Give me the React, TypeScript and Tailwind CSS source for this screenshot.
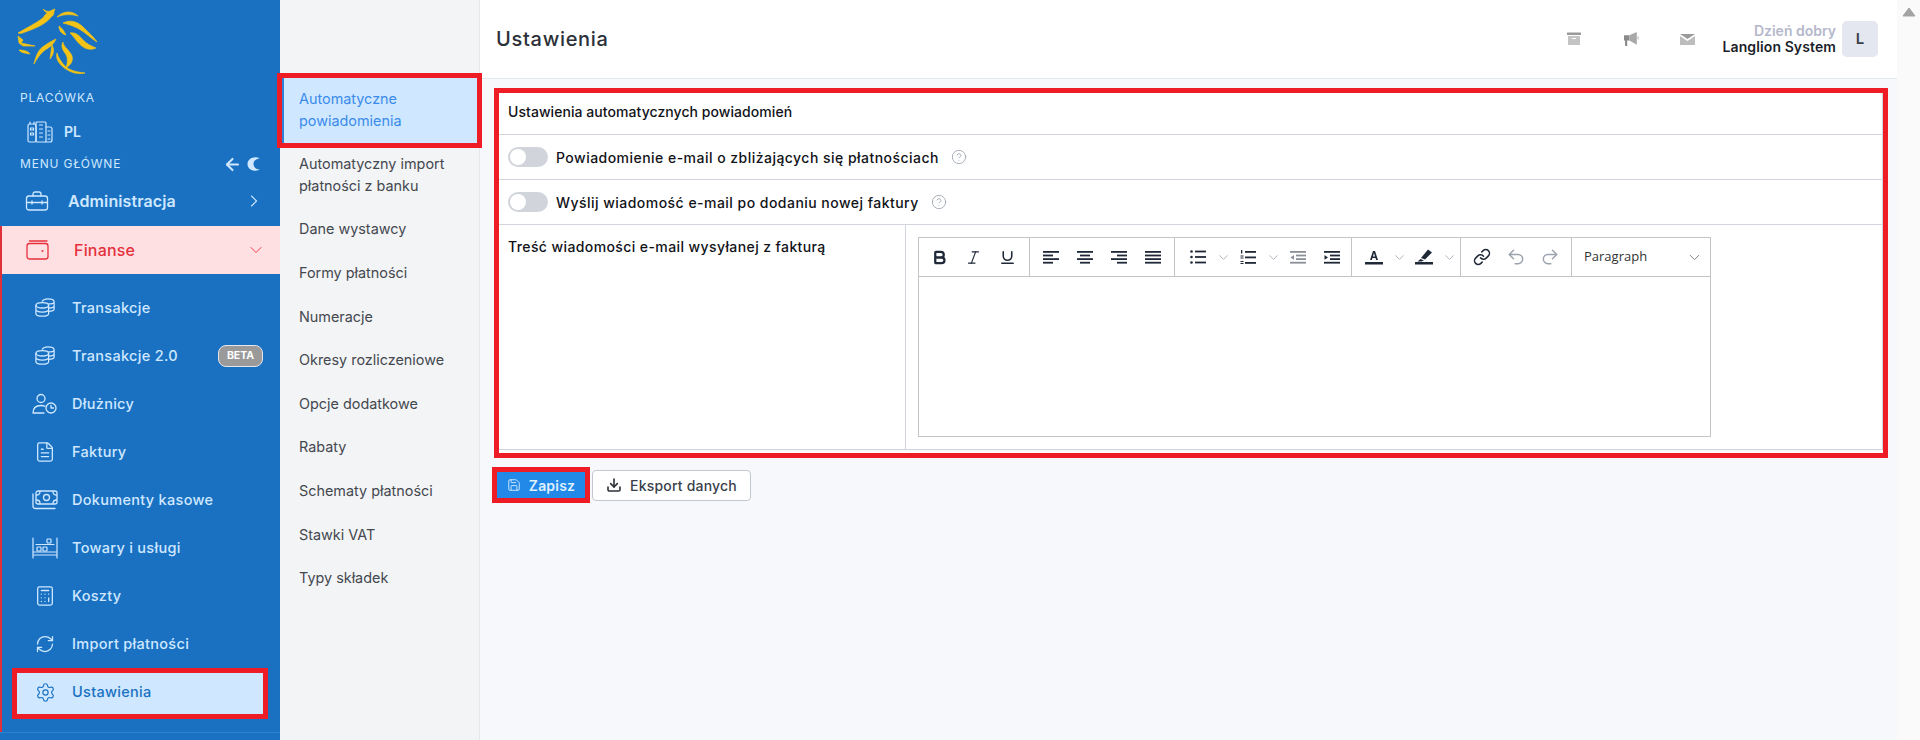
import React from "react";
import {
  ArrowLeft, ChevronRight, ChevronDown, Settings, RefreshCw, Calculator, FileText,
  CircleHelp, Bold, Italic, Underline, Link, Undo2, Redo2, Save, Download,
} from "lucide-react";

const Lion = () => (
  <svg width="84" height="68" viewBox="14 5 84 68" className="block">
    <g fill="#f3c316" stroke="#f3c316" strokeWidth="0.7" strokeLinejoin="round">
      <path d="M17 32C27 26 34 23 42 17C44 13 48 10 54 8C52 11 54 14 50 16C46 22 36 27 24 31C22 32 19 33 17 32Z" />
      <path d="M42 8C45 11 49 11 53 9C50 13 45 13 42 8Z" />
      <path d="M17 35L22 39L20 42L34 45L22 45L18 42Z" />
      <path d="M18 49C23 49 27 50 29 53C24 52 20 52 18 49Z" />
      <path d="M56 16C63 9 72 10 77 15C70 13 63 13 56 16Z" />
      <path d="M62 22C70 18 78 21 84 28C88 32 93 36 96 41C88 36 82 29 74 26C70 24 66 23 62 22Z" />
      <path d="M69 32C74 31 78 34 82 39C86 43 90 45 95 47C86 51 80 45 75 39C73 36 71 34 69 32Z" />
      <path d="M58 25C61 27 63 30 65 34C61 33 58 30 58 25Z" />
      <path d="M55 38C52 44 49 46 44 49C40 52 37 56 33 63C35 54 38 48 43 45C47 42 51 40 55 38Z" />
      <path d="M51 44C54 50 52 54 49 58C50 53 50 49 51 44Z" />
      <path d="M62 41C62 45 67 48 70 53C73 58 71 63 65 67C67 61 67 56 64 52C61 48 60 45 62 41Z" />
      <path d="M56 52C57 56 60 61 64 65C68 69 75 71 84 72C74 74 66 70 60 64C56 60 55 56 56 52Z" />
    </g>
  </svg>
);

const sw = { fill: "none", stroke: "currentColor", strokeWidth: 1.5, strokeLinecap: "round" as const, strokeLinejoin: "round" as const };

const ToolboxIcon = () => (
  <svg width="24" height="20" viewBox="0 0 24 20" {...sw} strokeWidth={1.3}>
    <rect x="1.500" y="5" width="21" height="14" rx="2.500" />
    <path d="M8 5V3c0-1 .8-2 2-2h4c1.200 0 2 1 2 2v2M1.500 11.500h21M7 10v3M17 10v3" />
  </svg>
);
const WalletIcon = () => (
  <svg width="23" height="20" viewBox="0 0 23 20" {...sw} strokeWidth={1.3}>
    <path d="M3.500 1H21" />
    <rect x="1" y="3.500" width="21" height="15.500" rx="2.500" />
    <circle cx="16.500" cy="11" r=".4" />
  </svg>
);
const MoonIcon = () => (
  <svg width="13" height="14" viewBox="0 0 13 14" fill="currentColor">
    <path d="M8.500 0.200C4 0.200 0.500 3 0.500 7s3.500 6.800 8 6.800c1.700 0 3.200-.5 4.200-1.200C9.500 12.500 6.500 10.300 6.500 7S9.500 1.500 12.700 1.400C11.600.6 10.200.2 8.500.2Z" />
  </svg>
);
const Coins = () => (
  <svg width="20" height="20" viewBox="0 0 22 22" {...sw} strokeWidth={1.4}>
    <ellipse cx="8" cy="8" rx="7" ry="3" />
    <path d="M1 8v9c0 1.700 3 3 7 3s7-1.300 7-3V8M1 12.500c0 1.700 3 3 7 3s7-1.300 7-3" />
    <path d="M8 3.500C9 2 11 1 14 1c4 0 7 1.200 7 3v8c0 1.200-2 2.500-6 2.700M15 6.500c3 0 6-1 6-2.500M15 11c3 0 6-1 6-2.500" />
  </svg>
);
const UserClock = () => (
  <svg width="26" height="22" viewBox="0 0 26 22" {...sw} strokeWidth={1.3}>
    <circle cx="9" cy="5.500" r="4" />
    <path d="M1 20c0-5 3-7.500 8-7.500 1.500 0 3 .2 4 .8M1 20h11" />
    <circle cx="19" cy="15" r="5" />
    <path d="M19 12.500V15h2.500" />
  </svg>
);
const Cash = () => (
  <svg width="26" height="20" viewBox="0 0 26 20" {...sw} strokeWidth={1.3}>
    <rect x="4" y="1" width="21" height="13" rx="2" />
    <circle cx="14.500" cy="7.500" r="3" />
    <path d="M8 1.500C8 4 6.500 5 4.500 5M21 1.500C21 4 22.500 5 24.500 5M8 13.500C8 11 6.500 10 4.500 10M21 13.500C21 11 22.500 10 24.500 10" />
    <path d="M1 4v12c0 1.500 1 2.500 2.500 2.500H23" />
  </svg>
);
const Shelf = () => (
  <svg width="26" height="22" viewBox="0 0 26 22" {...sw} strokeWidth={1.2}>
    <path d="M1 1v20M25 1v20M1 15h24M1 18h24" />
    <rect x="5" y="10" width="4" height="4" rx=".8" /><rect x="11" y="10" width="4" height="4" rx=".8" />
    <rect x="15" y="2" width="4" height="4" rx=".8" />
    <path d="M4 7.500h18" />
  </svg>
);
const Buildings = () => (
  <svg width="26" height="22" viewBox="0 0 26 22" {...sw} strokeWidth={1.2}>
    <rect x="1" y="3" width="8" height="18" rx="1.500" />
    <path d="M3 3V1M7 3V1" />
    <rect x="9" y="1" width="10" height="20" rx="1" />
    <path d="M19 6h4c1 0 2 1 2 2v11c0 1-1 2-2 2h-4" />
    <path d="M3.500 7h3v2h-3zM3.500 12h3v2h-3zM12.500 4h3M12.500 8h3M12.500 12h3M12.500 16h3M21 10h2M21 14h2M21 18h2" />
  </svg>
);

const items: { t: string; icon: React.ReactNode; beta?: boolean }[] = [
  { t: "Transakcje", icon: <Coins /> },
  { t: "Transakcje 2.0", icon: <Coins />, beta: true },
  { t: "Dłużnicy", icon: <UserClock /> },
  { t: "Faktury", icon: <FileText size={22} strokeWidth={1.4} /> },
  { t: "Dokumenty kasowe", icon: <Cash /> },
  { t: "Towary i usługi", icon: <Shelf /> },
  { t: "Koszty", icon: <Calculator size={22} strokeWidth={1.4} /> },
  { t: "Import płatności", icon: <RefreshCw size={20} strokeWidth={1.5} /> },
];

const sub = ["Dane wystawcy", "Formy płatności", "Numeracje", "Okresy rozliczeniowe", "Opcje dodatkowe", "Rabaty", "Schematy płatności", "Stawki VAT", "Typy składek"];

const Lines = ({ w }: { w: number[] }) => (
  <svg width="16" height="13" viewBox="0 0 16 13" fill="currentColor">
    {w.map((x, i) => {
      const [a, b] = x < 0 ? [16 + x, -x] : [0, x];
      return <rect key={i} x={a} y={i * 3.600} width={b} height="1.800" />;
    })}
  </svg>
);
const AlignC = () => (
  <svg width="16" height="13" viewBox="0 0 16 13" fill="currentColor">
    <rect x="0" y="0" width="16" height="1.800" /><rect x="3" y="3.600" width="10" height="1.800" /><rect x="0" y="7.200" width="16" height="1.800" /><rect x="3" y="10.800" width="10" height="1.800" />
  </svg>
);
const Bullets = () => (
  <svg width="16" height="14" viewBox="0 0 16 14" fill="currentColor">
    <circle cx="1.500" cy="1.500" r="1.300" /><circle cx="1.500" cy="7" r="1.300" /><circle cx="1.500" cy="12.500" r="1.300" />
    <rect x="5" y="0.600" width="11" height="1.800" /><rect x="5" y="6.100" width="11" height="1.800" /><rect x="5" y="11.600" width="11" height="1.800" />
  </svg>
);
const Numbered = () => (
  <svg width="16" height="15" viewBox="0 0 16 15" fill="currentColor">
    <rect x="1" y="0" width="1.300" height="3.500" /><rect x="0.500" y="5.500" width="3" height="1" /><rect x="0.500" y="7.500" width="3" height="1" /><rect x="0.500" y="11" width="3" height="1" /><rect x="0.500" y="13" width="3" height="1" />
    <rect x="5" y="1" width="11" height="1.800" /><rect x="5" y="6.500" width="11" height="1.800" /><rect x="5" y="12" width="11" height="1.800" />
  </svg>
);
const Indent = ({ out }: { out?: boolean }) => (
  <svg width="16" height="13" viewBox="0 0 16 13" fill="currentColor">
    <rect x="0" y="0" width="16" height="1.800" /><rect x="6" y="3.600" width="10" height="1.800" /><rect x="6" y="7.200" width="10" height="1.800" /><rect x="0" y="10.800" width="16" height="1.800" />
    {out ? <path d="M4 4L0.500 6.400L4 8.800Z" /> : <path d="M0.500 4L4 6.400L0.500 8.800Z" />}
  </svg>
);
const FontColor = () => (
  <svg width="18" height="16" viewBox="0 0 18 16" fill="currentColor">
    <path d="M5 11L8 2h2l3 9h-1.800L10.500 9h-3L6.800 11ZM8 7.500h2L9 4Z" fillRule="evenodd" />
    <rect x="0" y="13" width="18" height="2.500" />
  </svg>
);
const Marker = () => (
  <svg width="18" height="16" viewBox="0 0 18 16" fill="currentColor">
    <path d="M13 0.500L17 3.500L10 10.500L6 9Z" /><path d="M5.500 10L9 11.500L6.500 12.500H2.500Z" />
    <rect x="0" y="13" width="18" height="2.500" />
  </svg>
);
const Tb = ({ w = 34, c = "text-[#1f2937]", children }: { w?: number; c?: string; children: React.ReactNode }) => (
  <span className={`flex items-center justify-center h-full shrink-0 ${c}`} style={{ width: w }}>{children}</span>
);
const Chev = () => (
  <span className="flex items-center justify-center w-[16px] h-full shrink-0 text-[#9ca3af]">
    <ChevronDown size={15} strokeWidth={1.300} />
  </span>
);

const Toggle = () => (
  <span className="flex items-center w-[40px] h-[20px] rounded-full bg-[#d1d5db] px-[2px] shrink-0">
    <span className="block w-[16px] h-[16px] rounded-full bg-white" />
  </span>
);

const Row = ({ t }: { t: string }) => (
  <div className="flex items-center h-[45px] px-[9px] border-b border-[#d1d5db]">
    <Toggle />
    <span className="ml-[8px] text-[14px] font-medium text-[#111318] tracking-[0.47px]">{t}</span>
    <CircleHelp size={16} strokeWidth={1.300} className="ml-[12px] text-[#9ca3af]" />
  </div>
);

export default function App() {
  return (
    <div className="flex h-[740px] w-[1920px] overflow-hidden bg-[#f6f8fb] font-['Inter','Liberation_Sans',sans-serif]">
      <aside className="w-[280px] shrink-0 bg-[#1a71c2] text-[#cfe8ff] flex flex-col">
        <div className="h-[84px] pl-[15px] pt-[6px] shrink-0"><Lion /></div>
        <div className="h-[26px] pl-[20px] flex items-center text-[12px] font-normal tracking-[0.8px] pt-[1px]">PLACÓWKA</div>
        <div className="h-[44px] flex items-center pl-[27px] pb-[1px] shrink-0">
          <Buildings />
          <span className="ml-[11px] text-[14px] font-semibold">PL</span>
        </div>
        <div className="h-[20px] pl-[20px] pr-[20px] flex items-center justify-between text-[12px] tracking-[0.8px] shrink-0">
          <span>MENU GŁÓWNE</span>
          <span className="flex items-center">
            <ArrowLeft size={19} strokeWidth={2.600} />
            <span className="ml-[5px]"><MoonIcon /></span>
          </span>
        </div>
        <div className="h-[52px] flex items-center pl-[25px] pr-[16px] pt-[2px] shrink-0">
          <ToolboxIcon />
          <span className="ml-[19px] text-[16px] font-semibold tracking-[0.1px]">Administracja</span>
          <ChevronRight size={20} strokeWidth={1.300} className="ml-auto" />
        </div>
        <div className="border-l-2 border-[#e0303a] h-[506px] shrink-0">
          <div className="h-[48px] -ml-[2px] border-l-2 border-[#e0303a] bg-[#ffe0e2] text-[#e5303c] flex items-center pl-[24px] pr-[14px]">
            <WalletIcon />
            <span className="ml-[25px] pb-[1px] text-[16px] font-medium tracking-[0.2px]">Finanse</span>
            <ChevronDown size={20} strokeWidth={1.100} className="ml-auto" />
          </div>
          <div className="pt-[10px]">
            {items.map((it) => (
              <div key={it.t} className="h-[48px] flex items-center">
                <span className="w-[30px] ml-[28px] flex justify-center shrink-0">{it.icon}</span>
                <span className="ml-[12px] text-[14.500px] font-medium tracking-[0.3px]">{it.t}</span>
                {it.beta && (
                  <span className="ml-auto mr-[17px] w-[45px] h-[22px] rounded-[8px] border border-[#e5e7eb] bg-[#9a9a9a] text-white text-[10.500px] font-bold flex items-center justify-center">BETA</span>
                )}
              </div>
            ))}
            <div className="h-[51px] ml-[10px] w-[256px] border-[5px] border-[#ee1c25] bg-[#cfe8ff] text-[#1a71c2] flex items-center pb-[3px]">
              <span className="w-[30px] ml-[13px] flex justify-center shrink-0"><Settings size={21} strokeWidth={1.300} /></span>
              <span className="ml-[12px] text-[14.500px] font-medium tracking-[0.3px]">Ustawienia</span>
            </div>
          </div>
        </div>
        <div className="border-t border-[#2d83d6] flex-1" />
      </aside>

      <nav className="w-[200px] shrink-0 bg-[#f3f4f6] border-r border-[#e5e7eb] pt-[78px] text-[14.400px] leading-[21.600px] text-[#44484f]">
        <div className="relative z-10 -mt-[5px] -mb-[5px] -ml-[3px] w-[205px] border-[5px] border-[#ee1c25]">
          <div className="bg-[#cfe8ff] border-l-2 border-[#2f7fd6] text-[#3b8bea] pl-[15px] pr-[4px] pt-[10px] pb-[12px]">
            Automatyczne<br />powiadomienia
          </div>
        </div>
        <div className="px-[19px] pt-[10px] pb-[12px]">Automatyczny import<br />płatności z banku</div>
        {sub.map((s) => (
          <div key={s} className="px-[19px] pt-[10px] pb-[12px]">{s}</div>
        ))}
      </nav>

      <main className="flex-1 min-w-0 flex flex-col">
        <header className="h-[79px] shrink-0 bg-white border-b border-[#e5e9f0] flex items-center pl-[16px] pr-[19px]">
          <h1 className="text-[20px] font-medium text-[#2b3038] tracking-[0.7px]">Ustawienia</h1>
          <div className="ml-auto flex items-center">
            <svg width="14" height="14" viewBox="0 0 14 14" fill="#c4c4c4" className="mr-[43px]">
              <rect x="0" y="0.500" width="14" height="2.500" fill="#9a9a9a" /><path d="M1 4h12v9H1zM5 6v1h4V6z" fillRule="evenodd" />
            </svg>
            <svg width="16" height="16" viewBox="0 0 15 15" className="mr-[40px]">
              <path d="M0 4h5v5H3v5H1V9H0z" fill="#8a8a8a" /><path d="M5 4l7-3v12L5 9z" fill="#a8a8a8" /><rect x="12.500" y="5" width="1.500" height="3" fill="#cfcfcf" />
            </svg>
            <svg width="15" height="11" viewBox="0 0 15 11" className="mr-[28px]">
              <path d="M0 0h15L7.500 5z" fill="#9a9a9a" /><path d="M0 2l7.500 5L15 2v9H0z" fill="#bdbdbd" />
            </svg>
            <div className="text-right leading-[16px]">
              <div className="text-[14px] font-semibold text-[#b5b8cc]">Dzień dobry</div>
              <div className="text-[14px] font-semibold text-[#1c1f2b] tracking-[0.1px]">Langlion System</div>
            </div>
            <div className="ml-[6px] w-[36px] h-[36px] rounded-[5px] bg-[#e4e6f0] text-[#3a3f4b] flex items-center justify-center text-[15px] font-semibold">L</div>
          </div>
        </header>

        <div className="pl-[14px] pr-[9px] pt-[9px]">
          <div className="border-[5px] border-[#ee1c25] bg-white h-[370px]">
            <div className="border-r border-[#d1d5db] h-[357px]">
              <div className="h-[42px] flex items-center px-[9px] pb-[4px] border-b border-[#d1d5db] text-[14px] font-medium text-[#111318] tracking-[0.06px]">
                Ustawienia automatycznych powiadomień
              </div>
              <Row t="Powiadomienie e-mail o zbliżających się płatnościach" />
              <Row t="Wyślij wiadomość e-mail po dodaniu nowej faktury" />
              <div className="flex h-[225px] border-b border-[#d1d5db]">
                <div className="w-[407px] shrink-0 border-r border-[#d1d5db] px-[9px] pt-[11px] text-[14px] font-medium text-[#111318] tracking-[0.4px]">
                  Treść wiadomości e-mail wysyłanej z fakturą
                </div>
                <div className="pl-[12px] pt-[12px]">
                  <div className="w-[793px] h-[200px] border border-[#c4c4c4] flex flex-col">
                    <div className="h-[39px] shrink-0 border-b border-[#c4c4c4] flex items-stretch">
                      <div className="flex w-[111px] shrink-0 border-r border-[#c4c4c4] pl-[3px]">
                        <Tb><Bold size={17} strokeWidth={3.200} /></Tb>
                        <Tb><Italic size={17} strokeWidth={1.600} /></Tb>
                        <Tb><Underline size={17} strokeWidth={2.200} /></Tb>
                      </div>
                      <div className="flex w-[145px] shrink-0 border-r border-[#c4c4c4] pl-[4px]">
                        <Tb><Lines w={[16, 10, 16, 10]} /></Tb>
                        <Tb><AlignC /></Tb>
                        <Tb><Lines w={[16, -10, 16, -10]} /></Tb>
                        <Tb><Lines w={[16, 16, 16, 16]} /></Tb>
                      </div>
                      <div className="flex w-[177px] shrink-0 border-r border-[#c4c4c4] pl-[6px]">
                        <Tb w={34}><Bullets /></Tb><Chev />
                        <Tb w={34}><Numbered /></Tb><Chev />
                        <Tb w={34} c="text-[#8b9098]"><Indent out /></Tb>
                        <Tb w={34}><Indent /></Tb>
                      </div>
                      <div className="flex w-[109px] shrink-0 border-r border-[#c4c4c4] pl-[5px]">
                        <Tb w={34}><FontColor /></Tb><Chev />
                        <Tb w={34}><Marker /></Tb><Chev />
                      </div>
                      <div className="flex w-[111px] shrink-0 border-r border-[#c4c4c4] pl-[4px]">
                        <Tb><Link size={18} strokeWidth={2} /></Tb>
                        <Tb c="text-[#9ca3af]"><Undo2 size={20} strokeWidth={1.800} /></Tb>
                        <Tb c="text-[#9ca3af]"><Redo2 size={20} strokeWidth={1.800} /></Tb>
                      </div>
                      <div className="flex-1 flex items-center pl-[12px] pr-[7px] text-[13px] text-[#333] font-['Open_Sans',sans-serif]">
                        Paragraph
                        <ChevronDown size={17} strokeWidth={1.300} className="ml-auto text-[#777]" />
                      </div>
                    </div>
                    <div className="flex-1 bg-white" />
                  </div>
                </div>
              </div>
            </div>
          </div>
        </div>

        <div className="flex items-center pl-[12px] pt-[9px]">
          <div className="border-[5px] border-[#ee1c25]">
            <div className="w-[88px] h-[26px] bg-[#2289e8] text-[#dff0ff] flex items-center justify-center text-[14px] font-semibold tracking-[0.2px]">
              <Save size={14} strokeWidth={1.500} className="mr-[8px]" />Zapisz
            </div>
          </div>
          <div className="ml-[2px] w-[159px] h-[31px] border border-[#c3c7cf] rounded-[4px] bg-white text-[#3a3f4b] flex items-center justify-center text-[14px] font-medium tracking-[0.2px]">
            <Download size={16} strokeWidth={2.400} className="mr-[8px] text-[#2b3038]" />Eksport danych
          </div>
        </div>
      </main>

      <div className="w-[23px] shrink-0 bg-[#fafafa] flex justify-center pt-[7px]">
        <svg width="14" height="10" viewBox="0 0 14 10"><path d="M7 1L13 9H1Z" fill="#a3a3a3" stroke="#a3a3a3" strokeLinejoin="round" /></svg>
      </div>
    </div>
  );
}
